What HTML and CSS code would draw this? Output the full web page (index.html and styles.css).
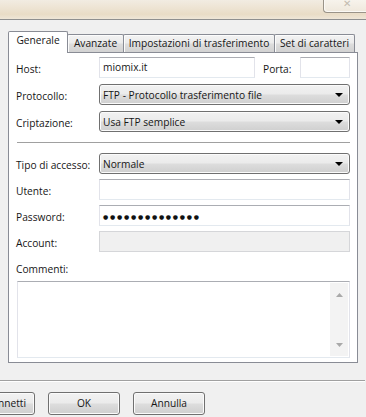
FILE: index.html
```html
<!DOCTYPE html>
<html>
<head>
<meta charset="utf-8">
<link rel="stylesheet" href="styles.css">
</head>
<body>
<div class="titlebar"><div class="close">✕</div></div>
<div class="dialog">
  <div class="tabs">
    <div class="tab active t1">Generale</div>
    <div class="tab t2">Avanzate</div>
    <div class="tab t3">Impostazioni di trasferimento</div>
    <div class="tab t4">Set di caratteri</div>
  </div>
  <div class="panel">
    <div class="row r-host">
      <span class="lbl">Host:</span>
      <div class="input host">miomix.it</div>
      <span class="lbl porta">Porta:</span>
      <div class="input portin"></div>
    </div>
    <div class="row r-g1">
      <span class="lbl">Protocollo:</span>
      <div class="combo"><span>FTP - Protocollo trasferimento file</span><i class="arrow"></i></div>
    </div>
    <div class="row r-g1">
      <span class="lbl">Criptazione:</span>
      <div class="combo"><span>Usa FTP semplice</span><i class="arrow"></i></div>
    </div>
    <div class="hsep"></div>
    <div class="row r-tipo">
      <span class="lbl">Tipo di accesso:</span>
      <div class="combo"><span>Normale</span><i class="arrow"></i></div>
    </div>
    <div class="row r-g2">
      <span class="lbl">Utente:</span>
      <div class="input"></div>
    </div>
    <div class="row r-g2">
      <span class="lbl">Password:</span>
      <div class="input"><span class="dots">●●●●●●●●●●●●●●</span></div>
    </div>
    <div class="row r-g2">
      <span class="lbl">Account:</span>
      <div class="input disabled"></div>
    </div>
    <div class="clbl">Commenti:</div>
    <div class="textarea">
      <div class="tspace"></div>
      <div class="vscroll">
        <svg class="sarrow" width="7" height="4" viewBox="0 0 7 4"><path d="M0 4 L3.5 0 L7 4 Z" fill="#a9a9a9"/></svg>
        <svg class="sarrow" width="7" height="4" viewBox="0 0 7 4"><path d="M0 0 L7 0 L3.5 4 Z" fill="#a9a9a9"/></svg>
      </div>
    </div>
  </div>
  <div class="bsep"></div>
  <div class="buttons">
    <div class="btn first">Connetti</div>
    <div class="btn">OK</div>
    <div class="btn">Annulla</div>
  </div>
</div>
</body>
</html>
```
FILE: styles.css
```css
* { box-sizing: border-box; }
html, body { margin: 0; padding: 0; }
body {
  width: 366px;
  height: 417px;
  overflow: hidden;
  background: #f0f0f0;
  font-family: "Open Sans", "Noto Sans", sans-serif;
  font-size: 10.2px;
  color: #161616;
}
.titlebar {
  height: 20px;
  border-bottom: 1px solid #8f8f8f;
  background: linear-gradient(to bottom, #f2ece2 0%, #ede3d2 45%, #e9dcc6 75%, #efe6d7 100%);
  display: flex;
  justify-content: flex-end;
  align-items: flex-start;
}
.close {
  width: 43px;
  height: 13px;
  border: 1px solid #9a9388;
  border-top: none;
  border-right: none;
  border-bottom-left-radius: 4px;
  background: linear-gradient(to bottom, #f7f3ec, #efe8dc);
  box-shadow: inset 1px -1px 0 #fbf9f5;
  color: #c2bbb0;
  font-size: 10px;
  line-height: 6px;
  text-align: center;
  padding-left: 3px;
}
.dialog { padding: 12px 0 0 8px; }
.tabs {
  display: flex;
  align-items: flex-end;
  height: 20px;
}
.tab {
  height: 18px;
  margin-left: -1px;
  border: 1px solid #898c95;
  border-bottom: none;
  border-radius: 2px 2px 0 0;
  background: linear-gradient(to bottom, #f3f3f3 0%, #ebebeb 48%, #dddddd 52%, #d2d2d2 100%);
  box-shadow: inset 1px 1px 0 #fcfcfc;
  text-align: center;
  line-height: 17px;
  white-space: nowrap;
}
.tab.active {
  position: relative;
  z-index: 1;
  height: 22px;
  margin-left: 0;
  margin-bottom: -1px;
  background: #fff;
  box-shadow: none;
  line-height: 17px;
}
.t1 { width: 60px; }
.t2 { width: 57px; }
.t3 { width: 152px; }
.t4 { width: 81px; }
.panel {
  width: 350px;
  height: 311px;
  background: #fff;
  border: 1px solid #898c95;
  padding: 4px 7px 0 7px;
}
.row {
  display: flex;
  align-items: center;
  height: 21px;
}
.r-g1 { margin-top: 6px; }
.r-tipo { margin-top: 10px; }
.r-g2 { margin-top: 5px; }
.lbl { width: 83px; flex: none; white-space: nowrap; padding-top: 2px; }
.lbl.porta { width: 37px; margin-left: 8px; }
.input {
  height: 21px;
  flex: 1;
  background: #fff;
  border: 1px solid #e2e3ea;
  border-top-color: #abadb3;
  border-bottom-color: #e3e9ef;
  padding: 0 3px;
  line-height: 19px;
  display: flex;
  align-items: center;
}
.input.host { flex: none; width: 156px; }
.input.portin { flex: none; width: 50px; }
.input.disabled { background: #f0f0f0; border-color: #d5d6d9; }
.dots {
  font-family: "DejaVu Sans", sans-serif;
  font-size: 6px;
  letter-spacing: 1.75px;
  color: #111;
  padding-top: 1px;
}
.combo {
  flex: 1;
  height: 21px;
  border: 1px solid #707070;
  border-radius: 3px;
  background: linear-gradient(to bottom, #f2f2f2 0%, #ebebeb 48%, #dddddd 52%, #cfcfcf 100%);
  box-shadow: inset 0 0 0 1px #fbfbfb;
  display: flex;
  align-items: center;
  justify-content: space-between;
  padding: 0 6px 0 3px;
}
.arrow {
  width: 0;
  height: 0;
  border-left: 4px solid transparent;
  border-right: 4px solid transparent;
  border-top: 4px solid #000;
}
.hsep {
  height: 1px;
  margin: 10px 0 0 1px;
  width: 333px;
  background: #a0a0a0;
}
.clbl {
  margin-top: 10px;
  height: 15px;
  line-height: 15px;
}
.textarea {
  margin: 4px 0 0 1px;
  width: 333px;
  height: 77px;
  border: 1px solid #e2e3ea;
  border-top-color: #abadb3;
  border-bottom-color: #e3e9ef;
  display: flex;
}
.tspace { flex: 1; }
.vscroll {
  width: 18px;
  margin: 1px;
  background: #f3f3f3;
  display: flex;
  flex-direction: column;
  justify-content: space-between;
  align-items: center;
  padding: 10px 0 9px;
}
.bsep {
  margin: 17px 0 0 -8px;
  width: 365px;
  height: 2px;
  border-top: 1px solid #a0a0a0;
  border-bottom: 1px solid #fff;
}
.buttons {
  display: flex;
  gap: 13px;
  margin: 10px 0 0 -45px;
}
.btn {
  width: 72px;
  height: 23px;
  flex: none;
  border: 1px solid #707070;
  border-radius: 3px;
  background: linear-gradient(to bottom, #f2f2f2 0%, #ebebeb 48%, #dddddd 52%, #cfcfcf 100%);
  box-shadow: inset 0 0 0 1px #fbfbfb;
  text-align: center;
  line-height: 20px;
}
.btn.first {
  text-align: right;
  padding-right: 8px;
}
```
